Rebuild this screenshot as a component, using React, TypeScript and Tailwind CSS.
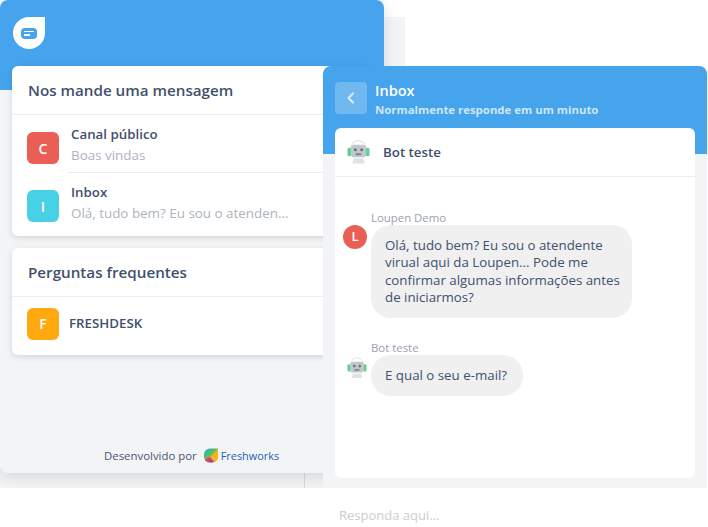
const font = "font-['Open_Sans','Noto_Sans',sans-serif]";

function BotAvatar({ width, height }: { width: number; height: number }) {
  return (
    <svg width={width} height={height} viewBox="0 0 24 26" className="shrink-0">
      <path d="M3.5 12C3.5 5 7.5 1 12 1s8.5 4 8.5 11" fill="none" stroke="#dfe2e5" strokeWidth="1.2" />
      <rect x="0.5" y="8.5" width="4" height="9" rx="2" fill="#5fcf97" />
      <rect x="19.5" y="8.5" width="4" height="9" rx="2" fill="#5fcf97" />
      <rect x="4" y="5.5" width="16" height="13" rx="3.5" fill="#c2c7cc" />
      <circle cx="8.7" cy="10.7" r="1.6" fill="#6c737b" />
      <circle cx="15.3" cy="10.7" r="1.6" fill="#6c737b" />
      <rect x="9" y="14.3" width="6" height="2" rx="0.5" fill="#7f858c" />
      <path d="M7 19.5h10l1.5 5.5h-13z" fill="#e0e3e5" />
    </svg>
  );
}

function FreshworksLogo() {
  return (
    <svg width="14" height="15" viewBox="0 0 15 16" className="shrink-0">
      <defs>
        <linearGradient id="leaf-base" x1="0" y1="0" x2="1" y2="1">
          <stop offset="0" stopColor="#21a8e6" />
          <stop offset="0.45" stopColor="#58c25a" />
          <stop offset="1" stopColor="#f5a623" />
        </linearGradient>
        <linearGradient id="leaf-low" x1="0" y1="0" x2="1" y2="1">
          <stop offset="0" stopColor="#f0642f" />
          <stop offset="0.55" stopColor="#d8387f" />
          <stop offset="1" stopColor="#7d4fc4" />
        </linearGradient>
      </defs>
      <path d="M15 .5V9a6.5 6.5 0 0 1-6.5 6.5H6.5A6.5 6.5 0 0 1 0 9V7A6.5 6.5 0 0 1 6.5.5z" fill="url(#leaf-base)" />
      <path d="M15 .5V9a6.5 6.5 0 0 1-4 6L6.5 9.5z" fill="#f7b21f" />
      <path d="M.7 12A6.5 6.5 0 0 0 6.5 15.5h2c.9 0 1.7-.2 2.5-.5L6.5 9.5z" fill="url(#leaf-low)" />
    </svg>
  );
}

function ChannelRow({
  letter,
  color,
  title,
  subtitle,
  divider,
}: {
  letter: string;
  color: string;
  title: string;
  subtitle: string;
  divider?: boolean;
}) {
  return (
    <div className="relative flex h-[58px] items-start pl-[15px]">
      <div className={`mt-[17px] flex h-8 w-8 items-center justify-center rounded-md text-[14px] font-semibold text-white ${color}`}>
        {letter}
      </div>
      <div className="mt-[9px] ml-3 min-w-0">
        <p className="text-[13.3px] leading-[20px] font-[550] text-[#41506c]">{title}</p>
        <p className="mt-[1px] text-[13.4px] leading-[20px] text-[#adb3c0]">{subtitle}</p>
      </div>
      {divider ? <div className="absolute right-0 bottom-0 left-[56px] h-px bg-[#ebedf0]" /> : null}
    </div>
  );
}

function HomePanel() {
  return (
    <div className="absolute top-0 left-0 flex h-[473px] w-[384px] flex-col rounded-lg bg-[#f3f4f6] shadow-[0_4px_16px_rgba(0,0,0,0.12)]">
      <div className="h-[90px] rounded-t-lg bg-[#45a4ec] pt-[17px] pl-[13px]">
        <div className="flex h-8 w-8 items-center justify-center rounded-full rounded-tr-[6px] bg-white">
          <div className="flex h-[11px] w-4 flex-col justify-center gap-[2px] rounded-[4px] bg-[#45a4ec] pl-[3px]">
            <div className="h-[1.5px] w-[10px] bg-white" />
            <div className="h-[1.5px] w-[6px] bg-white" />
          </div>
        </div>
      </div>

      <div className="mx-3 -mt-6 rounded-md bg-white shadow-[0_2px_6px_rgba(0,0,0,0.12)]">
        <div className="flex h-[49px] items-center border-b border-[#ebedf0] pl-4 text-[15.2px] font-[550] text-[#41506c]">
          Nos mande uma mensagem
        </div>
        <div className="pb-[5px]">
          <ChannelRow letter="C" color="bg-[#e95f55]" title="Canal público" subtitle="Boas vindas" divider />
          <ChannelRow letter="I" color="bg-[#48d0e6]" title="Inbox" subtitle="Olá, tudo bem? Eu sou o atenden..." />
        </div>
      </div>

      <div className="mx-3 mt-3 h-[107px] rounded-md bg-white shadow-[0_2px_6px_rgba(0,0,0,0.12)]">
        <div className="flex h-[49px] items-center border-b border-[#ebedf0] pl-4 text-[15.2px] font-[550] text-[#41506c]">
          Perguntas frequentes
        </div>
        <div className="flex h-[53px] items-center pl-[15px]">
          <div className="flex h-8 w-8 items-center justify-center rounded-md bg-[#ffa80f] text-[14px] font-semibold text-white">
            F
          </div>
          <p className="ml-[10px] text-[13.3px] font-[550] text-[#41506c]">FRESHDESK</p>
        </div>
      </div>

      <div className="mt-auto flex h-[25px] items-start pl-[104px] text-[11.4px] leading-[16px]">
        <span className="text-[#4a5670]">Desenvolvido por</span>
        <span className="ml-[7px]">
          <FreshworksLogo />
        </span>
        <span className="ml-[3px] text-[10.9px] text-[#1f5fb8]">Freshworks</span>
      </div>
    </div>
  );
}

function Message({
  author,
  avatar,
  lines,
  widthClass,
}: {
  author: string;
  avatar: React.ReactNode;
  lines: string[];
  widthClass: string;
}) {
  return (
    <div className="flex items-start">
      <div className="w-9 shrink-0 pt-[15px] pl-2">{avatar}</div>
      <div>
        <p className="text-[11.4px] leading-[16px] text-[#9aa1b0]">{author}</p>
        <div className={`-mt-px rounded-[20px] bg-[#f0f0f1] px-[14px] pt-3 pb-3 text-[13.3px] leading-[17.3px] text-[#41506c] ${widthClass}`}>
          {lines.map((line) => (
            <p key={line} className="whitespace-nowrap">
              {line}
            </p>
          ))}
        </div>
      </div>
    </div>
  );
}

function ChatPanel() {
  return (
    <div className="absolute top-[66px] left-[323px] flex h-[461px] w-[384px] flex-col rounded-t-lg bg-[#f3f4f6]">
      <div className="h-[88px] rounded-t-lg bg-[#45a4ec] pt-[16px] pl-3">
        <div className="flex items-start gap-2">
          <div className="flex h-8 w-8 items-center justify-center rounded-[4px] bg-[#6fb8f0]">
            <svg width="12" height="12" viewBox="0 0 12 12" fill="none">
              <path d="M8 1.5 3.5 6 8 10.5" stroke="#d5eafb" strokeWidth="2.2" strokeLinecap="round" strokeLinejoin="round" />
            </svg>
          </div>
          <div className="-mt-px">
            <p className="text-[14.5px] leading-[20px] font-semibold text-white">Inbox</p>
            <p className="text-[11.4px] leading-[18px] font-bold text-[#cfe6fa]">Normalmente responde em um minuto</p>
          </div>
        </div>
      </div>

      <div className="mx-3 -mt-[26px] h-[350px] rounded-md bg-white">
        <div className="flex h-[49px] items-center gap-[13px] border-b border-[#ebedf0] pl-3">
          <BotAvatar width={23} height={26} />
          <span className="pt-px text-[13.3px] font-[550] text-[#41506c]">Bot teste</span>
        </div>
        <div className="flex flex-col gap-[22px] pt-[33px]">
          <Message
            author="Loupen Demo"
            avatar={
              <div className="flex h-6 w-6 items-center justify-center rounded-full bg-[#e95f55] text-[13px] font-semibold text-white">
                L
              </div>
            }
            lines={["Olá, tudo bem? Eu sou o atendente", "virual aqui da Loupen... Pode me", "confirmar algumas informações antes", "de iniciarmos?"]}
            widthClass="w-[261px]"
          />
          <Message
            author="Bot teste"
            avatar={
              <div className="pt-[2px] pl-1">
                <BotAvatar width={20} height={22} />
              </div>
            }
            lines={["E qual o seu e-mail?"]}
            widthClass="w-[152px]"
          />
        </div>
      </div>
    </div>
  );
}

export default function App() {
  return (
    <div className={`relative h-[527px] w-[708px] overflow-hidden bg-white ${font}`}>
      <div className="absolute top-[17px] left-0 h-[471px] w-[405px] bg-[#f3f4f6]">
        <div className="absolute top-0 left-[304px] h-full w-px bg-[#d9dbde]" />
      </div>
      <HomePanel />
      <ChatPanel />
      <div className="absolute top-[488px] left-0 h-[39px] w-full bg-white pt-[18px] pl-[339px] text-[13px] leading-[18px] text-[#cfcccb]">
        Responda aqui...
      </div>
    </div>
  );
}
